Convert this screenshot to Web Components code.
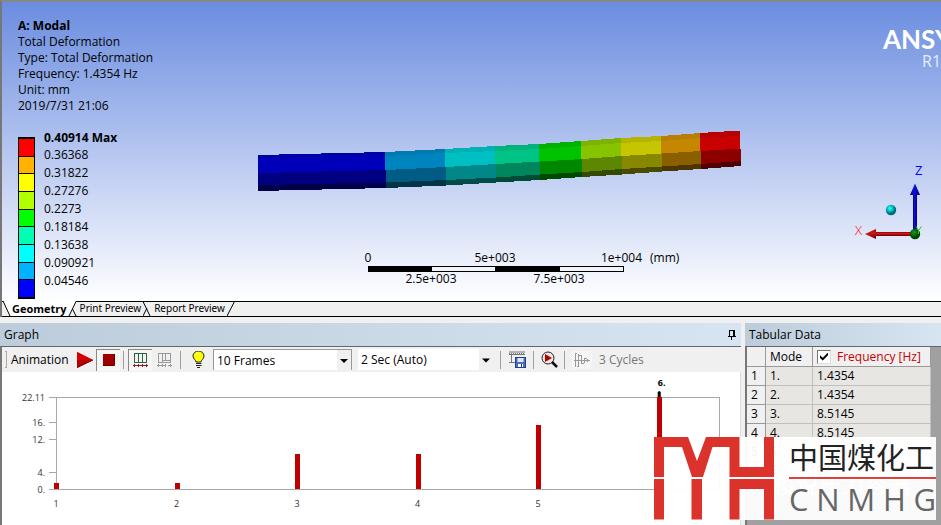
<!DOCTYPE html>
<html lang="en">
<head>
<meta charset="utf-8">
<title>A: Modal - Total Deformation</title>
<style>
html,body{margin:0}
body{font-family:"Open Sans","Noto Sans","Noto Sans CJK SC",sans-serif;font-size:12px;color:#000;background:#f0f0f0}
</style>
</head>
<body>
<modal-workbench></modal-workbench>
<script>
const make = (name, html, setup) => customElements.define(name, class extends HTMLElement {
  connectedCallback() {
    if (this.shadowRoot) return;
    const root = this.attachShadow({ mode: 'open' });
    const t = document.createElement('template');
    t.innerHTML = html;
    root.append(t.content.cloneNode(true));
    if (setup) setup.call(this, root);
  }
});

make('result-info', `
<style>
:host{display:block;line-height:16px;font-size:12px}
p{margin:0}
.name{font-weight:700}
</style>
<p class="name">A: Modal</p><p>Total Deformation</p><p>Type: Total Deformation</p>
<p>Frequency: 1.4354 Hz</p><p>Unit: mm</p><p>2019/7/31 21:06</p>`);

make('color-legend', `
<style>
:host{display:grid;grid-template-columns:17px auto;column-gap:9px;justify-content:start;font-size:12px}
.bar{border:1px solid #000;border-top-width:2px;border-bottom-width:2px;box-sizing:border-box;margin-top:7px;height:162px;display:grid;grid-auto-rows:1fr;gap:1px;background:#000}
ol{list-style:none;margin:0;padding:0;line-height:18px}
li:first-child{font-weight:700;line-height:16px}
</style>
<div class="bar"></div><ol></ol>`, function (root) {
  const colors = ['#f00','#ffb200','#ff0','#b2ff00','#0f0','#00ffb2','#0ff','#00b2ff','#00f'];
  const values = ['0.40914 Max','0.36368','0.31822','0.27276','0.2273','0.18184','0.13638','0.090921','0.04546'];
  root.querySelector('.bar').innerHTML = colors.map(c => `<span style="background:${c}"></span>`).join('');
  root.querySelector('ol').innerHTML = values.map(v => `<li>${v}</li>`).join('');
});

make('beam-model', `
<style>:host{display:block}svg{display:block}</style>
<svg width="484" height="62" viewBox="258 130 484 62" shape-rendering="crispEdges" role="img" aria-label="Deformed beam"></svg>`, function (root) {
  const x = [258,385,445,495,539,581,621,661,700,740];
  const edges = [
    [155,152,149,146,144,141,138,136,133,130.5],
    [158,156,153,151,149,146,143,141,138,136],
    [173,170,167,164,161.5,159,156,153.5,151,148.5],
    [185,182.5,180,177.5,174.5,172,169,166.5,164,161],
    [191,188,185.5,182.5,180,177,174.5,171.5,169,166]
  ];
  const shades = [
    ['#0000a8','#0000ba','#000080','#000048'],
    ['#007bb0','#0084c0','#005c85','#003548'],
    ['#00b0b2','#00bfc2','#008788','#004c4c'],
    ['#00b27c','#00c386','#00865d','#004b35'],
    ['#00b200','#00c300','#008700','#004a00'],
    ['#7cb200','#88c300','#5d8700','#344a00'],
    ['#b3b300','#c5c500','#888700','#4b4b00'],
    ['#b77e00','#c58700','#8a5f00','#4c3500'],
    ['#b80000','#c80000','#8c0000','#500000']
  ];
  let out = '';
  // Facets are painted from the top down, each running slightly under the next one.
  for (let r = 0; r < 4; r++) shades.forEach((s, i) => {
    const d = r > 1 ? 1 : 0, b = r < 3 ? 2 : 0;
    const l = x[i] + (i ? d : 0), e = x[i + 1] + d;
    out += `<polygon fill="${s[r]}" points="${l},${edges[r][i]} ${e},${edges[r][i+1]} ${e},${edges[r+1][i+1] + b} ${l},${edges[r+1][i] + b}"/>`;
  });
  root.querySelector('svg').innerHTML = out;
});

make('scale-ruler', `
<style>:host{display:block}svg{display:block;overflow:visible;font-size:12px}</style>
<svg width="320" height="40" viewBox="0 0 320 40">
<g shape-rendering="crispEdges"><rect x="4" y="16" width="256" height="6"/><rect x="68" y="17" width="63" height="4" fill="#f2f4fc"/><rect x="196" y="17" width="63" height="4" fill="#f2f4fc"/></g>
<text x="4" y="12" text-anchor="middle">0</text><text x="131" y="12" text-anchor="middle">5e+003</text><text x="237" y="12">1e+004</text><text x="286" y="12">(mm)</text>
<text x="67" y="33" text-anchor="middle">2.5e+003</text><text x="195" y="33" text-anchor="middle">7.5e+003</text>
</svg>`);

make('axis-triad', `
<style>:host{display:block}svg{display:block;font-size:12px}</style>
<svg width="91" height="80" viewBox="850 162 91 80">
<defs>
<linearGradient id="b"><stop stop-color="#000070"/><stop offset=".4" stop-color="#1010e0"/><stop offset="1" stop-color="#000070"/></linearGradient>
<linearGradient id="r" x2="0" y2="1"><stop stop-color="#900"/><stop offset=".4" stop-color="#d01818"/><stop offset="1" stop-color="#600"/></linearGradient>
<radialGradient id="c" cx=".4" cy=".35"><stop stop-color="#3ff"/><stop offset=".6" stop-color="#00b8b8"/><stop offset="1" stop-color="#006c70"/></radialGradient>
<radialGradient id="g" cx=".4" cy=".35"><stop stop-color="#1a9a1a"/><stop offset="1" stop-color="#004400"/></radialGradient>
</defs>
<rect x="913" y="193" width="4" height="38" fill="url(#b)"/><path d="M915 183.500L920 195H910z" fill="url(#b)"/>
<rect x="875" y="232" width="37" height="4" fill="url(#r)"/><path d="M865 234L876 229V239z" fill="url(#r)"/>
<circle cx="891" cy="210" r="5.200" fill="url(#c)"/><circle cx="915" cy="234" r="5.200" fill="url(#g)"/>
<path d="M916 226.500L918.500 230.500L921.500 226.500M918.500 230.500V234" stroke="#1c1" fill="none"/>
<text x="855" y="235" fill="#f00" font-size="13" font-weight="300">X</text><text x="915" y="175" fill="#00f" font-size="13">Z</text>
</svg>`);

make('view-tabs', `
<style>
:host{display:block}
.bar{display:flex;height:15px;background:linear-gradient(#000,#000) 0 0/100% 1px no-repeat,#f0f0f0;border-bottom:1px solid #000}
button{font:inherit;font-size:10px;font-family:"Noto Sans",sans-serif;line-height:15px;border:0;background:none;padding:0 2px 0 3px;margin:0;height:15px;white-space:nowrap}
button[aria-selected=true]{font-weight:700;font-size:11px;font-family:"Open Sans",sans-serif;background:#fff;padding:0 1px}
svg{display:block;flex:none;height:15px;fill:none;stroke:#000}
</style>
<div class="bar" role="tablist">
<svg width="9"><path d="M0 1H2L9 15H0z" fill="#f0f0f0" stroke="none"/><path d="M1 0H9V15H8z" fill="#fff" stroke="none"/><path d="M1 0L8 15"/></svg>
<button role="tab" aria-selected="true">Geometry</button>
<svg width="9"><path d="M0 0H8L1 15H0z" fill="#fff" stroke="none"/><path d="M1 15L8 .5M4.500 8L8 15"/></svg>
<button role="tab" aria-selected="false">Print Preview</button>
<svg width="8"><path d="M0 15L4 7M0 .5L7 15"/></svg>
<button role="tab" aria-selected="false">Report Preview</button>
<svg width="8"><path d="M0 15L7.500 .5"/></svg>
</div>`);

make('model-view', `
<style>
:host{display:flex;flex-direction:column;position:relative;overflow:hidden;box-sizing:border-box;border-top:2px solid #888;border-left:2px solid #777}
.scene{flex:1;background:linear-gradient(#6b8de0,#fff);padding:16px 16px 0;display:flex;flex-direction:column;gap:16px}
.on{position:absolute}
beam-model{top:128px;left:calc(50% - 214px)}
scale-ruler{top:248px;left:calc(50% - 108px)}
axis-triad{top:160px;right:0}
.brand{top:18px;left:calc(100% - 58px);color:#fff;font:700 26px/38px Lato,sans-serif;white-space:nowrap}
.release{top:48px;left:calc(100% - 19px);color:#e6edfc;font-size:16px;line-height:22px}
</style>
<div class="scene"><result-info></result-info><color-legend></color-legend></div>
<view-tabs></view-tabs>
<beam-model class="on"></beam-model><scale-ruler class="on"></scale-ruler><axis-triad class="on"></axis-triad>
<div class="on brand">ANSY</div><div class="on release">R1</div>`);

make('dock-panel', `
<style>
:host{display:flex;flex-direction:column;min-width:0}
header{display:flex;align-items:center;justify-content:space-between;height:23px;padding:0 4px;background:linear-gradient(90deg,#bdccda,#d7e5f2);box-sizing:border-box}
h2{margin:0;font-size:12px;font-weight:400;line-height:24px}
.body{flex:1;border-top:1px solid #666;border-left:2px solid #777;min-width:0;display:flex;flex-direction:column}
</style>
<header><h2></h2><slot name="tool"></slot></header><div class="body"><slot></slot></div>`, function (root) {
  root.querySelector('h2').textContent = this.getAttribute('heading');
});

make('tool-select', `
<style>
:host{display:block;height:21px;box-sizing:border-box;background:#fff}
label{display:grid;height:100%}
label>*{grid-area:1/1}
select{appearance:none;border:0;background:none;font:inherit;padding:0 3px;width:100%;outline:0;color:#000}
svg{justify-self:end;pointer-events:none;background:#f0f0f0;width:14px;height:100%}
</style>
<label><select></select><svg viewBox="0 0 14 20"><path d="M3 9H11L7 13z"/></svg></label>`, function (root) {
  const s = root.querySelector('select');
  s.setAttribute('aria-label', this.getAttribute('label'));
  s.add(new Option(this.getAttribute('value')));
});

make('animation-bar', `
<style>
:host{display:flex;align-items:center;height:25px;background:#f0f0f0;padding-left:3px;overflow:hidden;flex:none}
button{border:0;background:none;padding:0;margin:0;display:grid;place-items:center;height:22px;flex:none}
svg{display:block}
.grip{width:2px;height:17px;border:1px solid #aaa;border-left:0;box-sizing:border-box}
.title{padding-left:4px;width:66px;white-space:nowrap}
.sep{width:1px;height:18px;background:#a0a0a0;flex:none}
.on{width:24px;background:repeating-conic-gradient(#fff 0 25%,#eee 0 50%) 0 0/2px 2px;border-top:1px solid #888;border-left:1px solid #888;box-sizing:border-box}
.play{width:16px}.stop{margin:0 3px}
.g{margin-left:4px;margin-right:4px}
.gd{width:17px;margin-right:7px}
.bulb{width:14px;margin:0 8px 0 10px}
tool-select.a{width:139px;border:1px solid #999;border-width:1px 1px 0 1px;margin-right:6px}
tool-select.b{width:135px;margin-right:7px}
.ex{margin:0 7px 0 8px}.zm{margin:0 6px 0 7px}
.cy{width:20px;height:18px;margin:0 7px;background:repeating-conic-gradient(#fff 0 25%,#eee 0 50%) 0 0/2px 2px}
.off{color:#777;white-space:nowrap}
</style>
<span class="grip"></span><span class="title">Animation</span>
<button class="play" aria-label="Play"><svg width="16" height="16"><path d="M0 0L16 8L0 16z" fill="#b80000"/><path d="M0 0L16 8H0z" fill="#d80000"/><path d="M0 15.500L16 8" stroke="#700"/></svg></button>
<button class="on stop" aria-label="Stop"><svg width="12" height="12"><rect width="11" height="11" fill="#a00000"/><path d="M0 11.500H11.500V0" fill="none" stroke="#600"/></svg></button>
<span class="sep"></span>
<button class="on g" aria-label="Distributed"><svg width="15" height="14" shape-rendering="crispEdges" fill="none"><path d="M1.500 0V10M5.500 0V10M9.500 0V10M13.500 0V10M1 .5H14M1 9.500H14" stroke="#264"/><path d="M0 12.500H15M1.500 11V14M5.500 11V14M9.500 11V14M13.500 11V14" stroke="#902020"/></svg></button>
<button class="gd" aria-label="Result sets" disabled><svg width="15" height="14" shape-rendering="crispEdges" fill="none" stroke="#999"><path d="M1.500 0V10M5.500 0V10M8.500 0V7M13.500 0V10M1 .5H14M1 9.500H14M5 7.500H14M0 12.500H9M11 12.500H15M1.500 11V14M5.500 11V14M8.500 11V14M13.500 11V14"/></svg></button>
<span class="sep"></span>
<button class="bulb" aria-label="Update contour range"><svg width="13" height="17"><path d="M4 11C4 9 1 8 1 5A5.500 5 0 0 1 12 5C12 8 9 9 9 11z" fill="#ff0" stroke="#222"/><path d="M3.500 3.500L6 2" stroke="#fff"/><path d="M4 12.500H9.500M4 14.500H9.500M5 16.500H8" stroke="#222"/></svg></button>
<tool-select class="a" label="Frames" value="10 Frames"></tool-select>
<tool-select class="b" label="Duration" value="2 Sec (Auto)"></tool-select>
<span class="sep"></span>
<button class="ex" aria-label="Export video"><svg width="17" height="17" fill="none"><path d="M0 1H16M0 3.500H16M2.500 4V11M0 11.500H6" stroke="#777"/><path d="M0 2.500H16" stroke="#777" stroke-dasharray="1 1"/><rect x="6.500" y="6.500" width="10" height="10" fill="#4a6cc8" stroke="#234080"/><path d="M8.500 7H14.500V11H8.500z" fill="#dfe8fa"/><path d="M9 13H14V16H9z" fill="#fff"/><path d="M12.500 13V16" stroke="#234080"/></svg></button>
<span class="sep"></span>
<button class="zm" aria-label="Zoom to animation"><svg width="17" height="17" fill="none"><circle cx="7" cy="7" r="6" fill="#f7e6e6" stroke="#222"/><path d="M4 3L11 7L4 11z" fill="#b00000"/><path d="M11 11L16 16" stroke="#111" stroke-width="2.500"/></svg></button>
<span class="sep"></span>
<button class="cy" aria-label="Cycles" disabled><svg width="16" height="16" shape-rendering="crispEdges" fill="none" stroke="#999"><path d="M1.500 1V15M4.500 2V14M7.500 4V12M10.500 6V11M13.500 7V10M1 1.500H3M3 14.500H5M5 3.500H8M8 11.500H10M0 8.500H16M10 6.500H13"/></svg></button>
<span class="off">3 Cycles</span>`);

make('frequency-chart', `
<style>
:host{display:flex;flex:1;background:#fff;border-right:1px solid #ddd;padding:25px 21px 36px 54px;min-height:92px}
svg{display:block;width:100%;height:92px;overflow:visible;font-size:9px;fill:#333}
line{stroke:#a8a8a8;shape-rendering:crispEdges}
rect{fill:#c00000;shape-rendering:crispEdges}
</style>
<svg role="img" aria-label="Frequency by mode"></svg>`, function (root) {
  const max = 22.11, modes = [1.4354, 1.4354, 8.5145, 8.5145, 15.49, 22.11];
  const y = v => (1 - v / max) * 100;
  let out = '<line x1="0" x2="100%" y1="0" y2="0"/><line x1="0" x2="100%" y1="100%" y2="100%"/><line x1="0" x2="0" y1="0" y2="100%"/><line x1="100%" x2="100%" y1="0" y2="100%"/>';
  [['22.11', 22.11], ['16.', 16], ['12.', 12], ['4.', 4], ['0.', 0]].forEach(([t, v]) => {
    out += `<line x1="-7" x2="0" y1="${y(v)}%" y2="${y(v)}%"/><text x="-11" y="${y(v)}%" dy="4" text-anchor="end">${t}</text>`;
  });
  modes.forEach((v, i) => {
    const x = i / 5.5 * 100;
    out += `<svg x="${x}%" overflow="visible" style="height:100%"><rect x="-2" y="${y(v)}%" width="5" height="${100 - y(v)}%"/><text x="0" y="100%" dy="18" text-anchor="middle">${i + 1}</text></svg>`;
  });
  out += `<svg x="${500 / 5.5}%" overflow="visible"><path d="M-1 0V-5L.5 -6L2 -5V0z" fill="#000"/><text x="3" y="-11" text-anchor="middle" font-weight="700" fill="#000">6.</text></svg>`;
  root.querySelector('svg').innerHTML = out;
});

make('mode-table', `
<style>
:host{display:block;flex:1;background:#a0a0a0;min-height:178px}
table{border-collapse:separate;border-spacing:0;table-layout:fixed;width:184px;line-height:18px}
th,td{height:18px;padding:0 0 0 4px;text-align:left;font-weight:400;border-right:1px solid #c0c0c0;border-bottom:1px solid #c0c0c0;background:#e7e6e3;white-space:nowrap}
th{background:#f0f0f0;border-color:#999}
thead th{height:19px}
label{display:flex;align-items:center;gap:6px;color:#c80000}
input{appearance:none;width:14px;height:14px;margin:0;background:#fff;border:1px solid #777;border-right-color:#ddd;border-bottom-color:#ddd;display:grid;place-items:center}
input:checked::before{content:"";width:8px;height:8px;background:#000;clip-path:polygon(0 35%,35% 65%,100% 0,100% 35%,35% 100%,0 70%)}
</style>
<table><colgroup><col style="width:19px"><col style="width:47px"><col></colgroup>
<thead><tr><th></th><th scope="col">Mode</th><th scope="col"><label><input type="checkbox" checked>Frequency [Hz]</label></th></tr></thead><tbody></tbody></table>`, function (root) {
  root.querySelector('tbody').innerHTML = ['1.4354','1.4354','8.5145','8.5145','15.49','22.11']
    .map((f, i) => `<tr><th scope="row">${i + 1}</th><td>${i + 1}.</td><td>${f}</td></tr>`).join('');
});

make('site-badge', `
<style>
:host{display:grid;grid-template-columns:120px 147px;column-gap:15px;width:282px;height:83px;background:rgba(255,255,255,.95);overflow:hidden}
svg{display:block}
.words{display:grid;grid-template-rows:40px 2px 41px}
.cn{font:400 29px/38px "Noto Sans CJK SC",sans-serif;color:#222;white-space:nowrap}
.rule{background:#e2403a}
.en{display:flex;justify-content:space-between;font-size:31px;line-height:41px;color:#666}
</style>
<svg width="120" height="83" viewBox="0 0 120 83" fill="#dc322c"><path d="M0 0H34L43 24L52 0H85.500V30H110V0H120V40H75.500V10H58.500L49 40H38L28 10H10V40H0zM0 42H10V82.500H0zM37.500 42H48V82.500H37.500zM75.500 42H120V82.500H110V52H85.500V82.500H75.500z"/></svg>
<div class="words"><div class="cn">中国煤化工</div><div class="rule"></div><div class="en"><span>C</span><span>N</span><span>M</span><span>H</span><span>G</span></div></div>`);

make('modal-workbench', `
<style>
:host{display:flex;flex-direction:column;min-height:100vh;position:relative;overflow:hidden}
model-view{flex:1}
.docks{display:grid;grid-template-columns:minmax(0,1fr) 196px;column-gap:4px;padding-top:6px}
.pin{background:none;border:0;padding:0;width:9px;height:10px}
.pin svg{display:block}
site-badge,.author{position:absolute;right:5px;bottom:5px}
.author{right:30px;bottom:28px;font:400 23px/28px "Noto Sans CJK SC",sans-serif;color:#fff;white-space:nowrap}
</style>
<model-view></model-view>
<div class="docks">
<dock-panel heading="Graph"><button slot="tool" class="pin" aria-label="Pin panel"><svg width="8" height="10" fill="none" stroke="#000" shape-rendering="crispEdges"><path d="M1.500 6V.5H6.500V6M5.500 0V6M0 6.500H8M3.500 7V10"/></svg></button><animation-bar></animation-bar><frequency-chart></frequency-chart></dock-panel>
<dock-panel heading="Tabular Data"><mode-table></mode-table></dock-panel>
</div>
<div class="author">卢梭说压力容器</div>
<site-badge></site-badge>`);
</script>
</body>
</html>
